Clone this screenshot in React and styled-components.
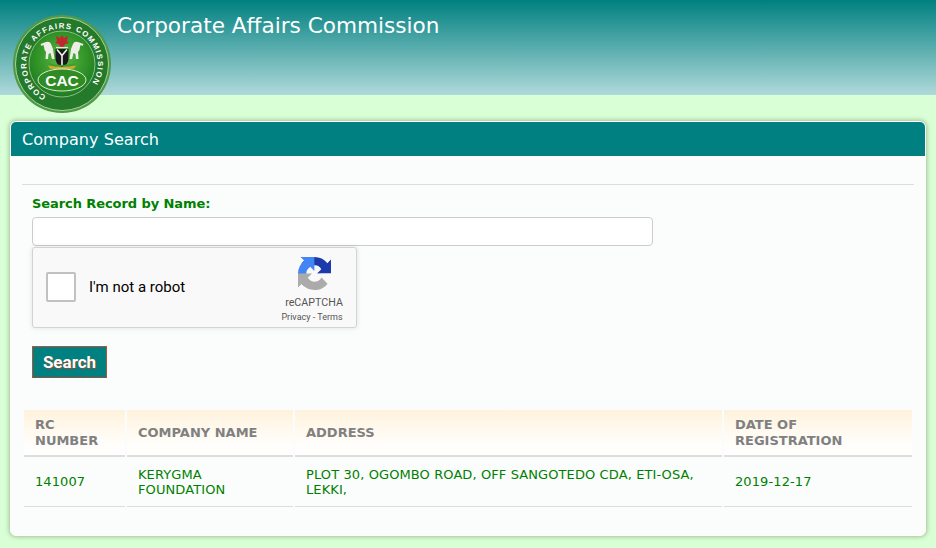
import React from 'react';
import styled, { createGlobalStyle } from 'styled-components';

// -------------------------------------------------------------------------
// Styles

const GlobalStyle = createGlobalStyle`
  html, body {
    margin: 0;
    padding: 0;
    background: #d9ffd6;
    font-family: "DejaVu Sans", Verdana, sans-serif;
  }
`;

const Page = styled.div`
  width: 936px;
  height: 548px;
  overflow: hidden;
  position: relative;
`;

const Header = styled.header`
  height: 95px;
  box-sizing: border-box;
  padding: 12px 0 0 117px;
  background: linear-gradient(to bottom, #008080 0%, #b0d9da 100%);
  color: #fff;
  font-size: 21.6px;
  line-height: 28px;
`;

const LogoWrap = styled.div`
  position: absolute;
  left: 13px;
  top: 15px;
  width: 98px;
  height: 98px;
`;

const Card = styled.main`
  margin: 26px 10px 0;
  height: 415px;
  box-sizing: border-box;
  border: 1px solid #fff;
  border-radius: 6px;
  background: #fbfdfc;
  box-shadow: 0 0 4px 1px rgba(120, 140, 100, 0.55);
  overflow: hidden;
`;

const CardTitle = styled.h2`
  margin: 0;
  height: 34px;
  padding-left: 11px;
  background: #008080;
  color: #fff;
  font-size: 16.1px;
  font-weight: normal;
  line-height: 35px;
`;

const CardBody = styled.div`
  padding: 28px 11px 0;
`;

const Rule = styled.hr`
  margin: 0;
  border: 0;
  border-top: 1px solid #dddddd;
`;

const Form = styled.form`
  padding: 11px 0 0 10px;
`;

const Label = styled.label`
  display: block;
  color: #008000;
  font-size: 13px;
  font-weight: bold;
  line-height: 15px;
  letter-spacing: -0.08px;
`;

const TextInput = styled.input`
  display: block;
  box-sizing: border-box;
  width: 621px;
  height: 29px;
  margin-top: 6px;
  border: 1px solid #cccccc;
  border-radius: 4px;
  background: #fff;
`;

const Captcha = styled.div`
  box-sizing: border-box;
  width: 325px;
  height: 81px;
  margin-top: 1px;
  padding-left: 13px;
  display: flex;
  align-items: center;
  border: 1px solid #d3d3d3;
  border-radius: 3px;
  background: #f9f9f9;
  box-shadow: 0 0 4px 1px rgba(0, 0, 0, 0.08);
  font-family: Roboto, "Liberation Sans", sans-serif;
`;

const CheckBox = styled.div`
  box-sizing: border-box;
  width: 30px;
  height: 30px;
  margin-bottom: 1px;
  border: 2px solid #c1c1c1;
  border-radius: 2px;
  background: #fff;
`;

const CaptchaLabel = styled.span`
  margin: 0 0 2px 13px;
  flex: 1;
  color: #000;
  font-size: 15px;
`;

const CaptchaBrand = styled.div`
  width: 72px;
  margin-right: 6px;
  padding-top: 5px;
  display: flex;
  flex-direction: column;
  align-items: center;
  color: #555;
`;

const CaptchaName = styled.span`
  margin-top: 6px;
  font-size: 10.7px;
  line-height: 13px;
`;

const CaptchaLinks = styled.span`
  margin: 2px 4px 0 0;
  font-size: 9px;
  line-height: 12px;
  white-space: nowrap;
`;

const SearchButton = styled.button`
  display: block;
  box-sizing: border-box;
  width: 75px;
  height: 32px;
  margin-top: 18px;
  padding: 0;
  border: 1px solid #b0543c;
  border-bottom-color: #9a4a36;
  background: #008080;
  color: #fff;
  font-family: Roboto, "Liberation Sans", sans-serif;
  font-size: 17px;
  font-weight: bold;
  text-shadow: 1px 1px 1px #a5492f;
`;

const Table = styled.table`
  width: 892px;
  margin: 32px 0 0;
  border-collapse: separate;
  border-spacing: 2px 0;
  table-layout: fixed;
`;

const Col = styled.col`
  width: ${(p) => p.$w}px;
`;

const HeadCell = styled.th`
  box-sizing: border-box;
  height: 47px;
  padding: 0 11px;
  background: linear-gradient(to bottom, #fff2dc 0%, #fffdf9 70%, #ffffff 100%);
  border-bottom: 2px solid #dddddd;
  color: #808080;
  font-size: 13px;
  font-weight: bold;
  line-height: 16px;
  text-align: left;
`;

const Cell = styled.td`
  box-sizing: border-box;
  height: 50px;
  padding: 0 11px;
  border-bottom: 1px solid #dddddd;
  color: #008000;
  font-size: 13px;
  line-height: 15px;
  letter-spacing: 0.1px;
`;

// -------------------------------------------------------------------------
// Sous composants

const HORSE = 'M33 27 q4-1 5 2 l2 5 l1.5 10 h-2.5 l-1.5-6 l-2 1 l-.5 5 h-2.5 l.5-7 q-2-2-2-5 l-.5-2 l-2 1 l-1-2 z';

function Logo() {
  return (
    <svg width="98" height="98" viewBox="0 0 98 98">
      <defs>
        <radialGradient id="seal" cx="50%" cy="42%" r="60%">
          <stop offset="0%" stopColor="#5cbb42" />
          <stop offset="60%" stopColor="#339529" />
          <stop offset="100%" stopColor="#1c7a20" />
        </radialGradient>
        <path id="ring" d="M33 80.9 A35.6 35.6 0 1 1 67 79.8" />
      </defs>
      <circle cx="49" cy="49" r="49" fill="#4f9a46" />
      <circle cx="49" cy="49" r="46.5" fill="#24792a" stroke="#c4e2b6" strokeWidth="0.8" />
      <circle cx="49" cy="49" r="33" fill="url(#seal)" stroke="#cfe8c2" strokeWidth="0.6" />
      <text fontFamily="'Liberation Sans', sans-serif" fontSize="7.8" fontWeight="bold" fill="#fff" letterSpacing="1.2">
        <textPath href="#ring">CORPORATE AFFAIRS COMMISSION</textPath>
      </text>
      {/* aigle */}
      <path d="M49 20 l2 3 l4-2 l-1 5 l2 2 l-4 1 l-1 3 h-4 l-1-3 l-4-1 l2-2 l-1-5 l4 2 z" fill="#c2272d" />
      <path d="M43 32.5 h12" stroke="#dfeedd" strokeWidth="1.2" />
      {/* chevaux */}
      <path d={HORSE} fill="#efeee6" />
      <path d={HORSE} fill="#efeee6" transform="translate(98 0) scale(-1 1)" />
      {/* bouclier */}
      <path d="M42.5 34 h13 v10 q0 5 -6.5 8 q-6.5-3 -6.5-8 z" fill="#1a1a1a" />
      <path d="M44 34.5 l5 6 l5-6 M49 40.5 v10" fill="none" stroke="#f0f0f0" strokeWidth="1.6" />
      {/* base */}
      <path d="M35 48 q14 4 28 0 l-1 2 q-13 3 -26 0 z" fill="#3f9c34" />
      <path d="M35 50.5 q14 3 28 0 l-2 3 q-12 2 -24 0 z" fill="#d9a92b" />
      {/* CAC */}
      <ellipse cx="49" cy="65" rx="24" ry="11" fill="#2f8c24" stroke="#e9f5e0" strokeWidth="0.9" />
      <text x="49" y="70.5" textAnchor="middle" fontFamily="'Liberation Sans', sans-serif" fontSize="15.5" fontWeight="bold" fill="#fff">CAC</text>
    </svg>
  );
}

function RecaptchaIcon() {
  return (
    <svg width="33" height="33" viewBox="0 0 64 64">
      <path d="M64 32l-.01-1.37V5.09l-7.07 7.07A31.97 31.97 0 0 0 32 0C21.73 0 12.6 4.85 6.75 12.36l11.6 11.72a15.5 15.5 0 0 1 4.69-5.26c2-1.57 4.85-2.85 8.96-2.85.5 0 .88.06 1.16.17a15.5 15.5 0 0 1 12 7.42l-8.2 8.2c10.4-.04 22.14-.07 28.04 0" fill="#1c3aa9" />
      <path d="M31.97 0l-1.37.01H5.09l7.07 7.07A31.97 31.97 0 0 0 0 32.03c0 10.27 4.85 19.4 12.36 25.25l11.72-11.6a15.5 15.5 0 0 1-5.26-4.69c-1.57-2-2.85-4.85-2.85-8.96 0-.5.06-.88.17-1.16a15.5 15.5 0 0 1 7.42-12l8.2 8.2c-.04-10.4-.07-22.14 0-28.04" fill="#4285f4" />
      <path d="M0 32l.01 1.37v25.54l7.07-7.07A31.97 31.97 0 0 0 32 64c10.27 0 19.4-4.85 25.25-12.36l-11.6-11.72a15.5 15.5 0 0 1-4.69 5.26c-2 1.57-4.85 2.85-8.96 2.85-.5 0-.88-.06-1.16-.17a15.5 15.5 0 0 1-12-7.42l8.2-8.2C16.03 32.08 5.9 32.07 0 32" fill="#ababab" />
    </svg>
  );
}

export default function App() {
  return (
    <Page>
      <GlobalStyle />
      <Header>Corporate Affairs Commission</Header>
      <LogoWrap>
        <Logo />
      </LogoWrap>
      <Card>
        <CardTitle>Company Search</CardTitle>
        <CardBody>
          <Rule />
          <Form onSubmit={(e) => e.preventDefault()}>
            <Label htmlFor="name">Search Record by Name:</Label>
            <TextInput id="name" type="text" />
            <Captcha>
              <CheckBox />
              <CaptchaLabel>I'm not a robot</CaptchaLabel>
              <CaptchaBrand>
                <RecaptchaIcon />
                <CaptchaName>reCAPTCHA</CaptchaName>
                <CaptchaLinks>Privacy - Terms</CaptchaLinks>
              </CaptchaBrand>
            </Captcha>
            <SearchButton type="submit">Search</SearchButton>
          </Form>
          <Table>
            <colgroup>
              <Col $w={101} />
              <Col $w={166} />
              <Col $w={427} />
              <Col $w={188} />
            </colgroup>
            <thead>
              <tr>
                <HeadCell>RC NUMBER</HeadCell>
                <HeadCell>COMPANY NAME</HeadCell>
                <HeadCell>ADDRESS</HeadCell>
                <HeadCell>DATE OF REGISTRATION</HeadCell>
              </tr>
            </thead>
            <tbody>
              <tr>
                <Cell>141007</Cell>
                <Cell>KERYGMA FOUNDATION</Cell>
                <Cell>PLOT 30, OGOMBO ROAD, OFF SANGOTEDO CDA, ETI-OSA, LEKKI,</Cell>
                <Cell>2019-12-17</Cell>
              </tr>
            </tbody>
          </Table>
        </CardBody>
      </Card>
    </Page>
  );
}
